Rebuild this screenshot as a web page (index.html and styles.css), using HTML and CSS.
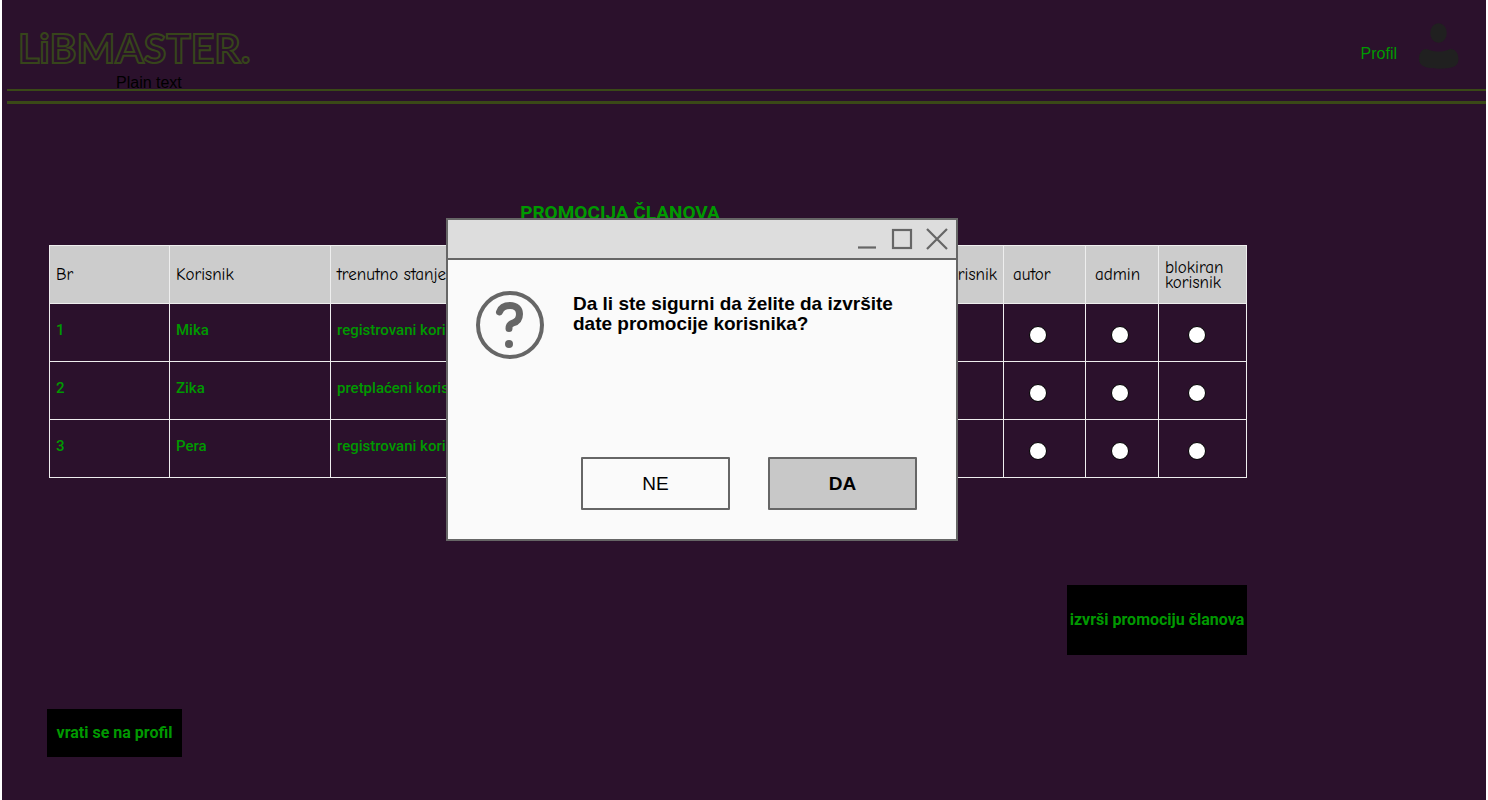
FILE: index.html
```html
<!DOCTYPE html>
<html lang="sr-Latn">
<head>
<meta charset="utf-8">
<title>Libmaster – Promocija članova</title>
<link rel="stylesheet" href="styles.css">
</head>
<body>
<div class="page">
  <header class="header">
    <div class="brand">
      <div class="logo">LiBMASTER.</div>
      <div class="tagline">Plain text</div>
    </div>
    <a class="profile" href="#profil">
      <span>Profil</span>
      <svg class="avatar" viewBox="0 0 40 46" aria-hidden="true"><ellipse cx="19.500" cy="10" rx="8.300" ry="9.800"/><path d="M0 36C0 30 3 25.500 8 26C12 28 16 28.500 20 28.500C24 28.500 27 28 31 26C36 25.500 39.500 30 39.500 36C39.500 42 36 44 30 45C23 46 15 46 8 44.500C3 43 0 41 0 36Z"/></svg>
    </a>
  </header>
  <main class="content">
    <h1 class="title">PROMOCIJA ČLANOVA</h1>
    <table class="members">
      <colgroup>
        <col class="col-no"><col class="col-user"><col class="col-state"><col class="col-sub"><col class="col-author"><col class="col-admin"><col class="col-blocked">
      </colgroup>
      <thead>
        <tr><th>Br</th><th>Korisnik</th><th>trenutno stanje</th><th class="end">pretplaćeni korisnik</th><th class="role">autor</th><th class="role">admin</th><th>blokiran korisnik</th></tr>
      </thead>
      <tbody>
        <tr><td>1</td><td>Mika</td><td>registrovani korisnik</td>
          <td class="pick"><input type="radio" name="r1" aria-label="Mika: pretplaćeni korisnik"></td><td class="pick"><input type="radio" name="r1" aria-label="Mika: autor"></td><td class="pick"><input type="radio" name="r1" aria-label="Mika: admin"></td><td class="pick wide"><input type="radio" name="r1" aria-label="Mika: blokiran korisnik"></td></tr>
        <tr><td>2</td><td>Zika</td><td>pretplaćeni korisnik</td>
          <td class="pick"><input type="radio" name="r2" aria-label="Zika: pretplaćeni korisnik"></td><td class="pick"><input type="radio" name="r2" aria-label="Zika: autor"></td><td class="pick"><input type="radio" name="r2" aria-label="Zika: admin"></td><td class="pick wide"><input type="radio" name="r2" aria-label="Zika: blokiran korisnik"></td></tr>
        <tr><td>3</td><td>Pera</td><td>registrovani korisnik</td>
          <td class="pick"><input type="radio" name="r3" aria-label="Pera: pretplaćeni korisnik"></td><td class="pick"><input type="radio" name="r3" aria-label="Pera: autor"></td><td class="pick"><input type="radio" name="r3" aria-label="Pera: admin"></td><td class="pick wide"><input type="radio" name="r3" aria-label="Pera: blokiran korisnik"></td></tr>
      </tbody>
    </table>
    <div class="submit-row"><button class="action promote" type="button">izvrši promociju članova</button></div>
    <div class="back-row"><button class="action back" type="button">vrati se na profil</button></div>
  </main>
  <div class="overlay">
    <section class="dialog" role="dialog" aria-modal="true" aria-labelledby="question">
      <div class="titlebar">
        <button type="button" aria-label="Umanji"><svg viewBox="0 0 22 22"><path d="M2 19.500H20"/></svg></button>
        <button type="button" aria-label="Uvećaj"><svg viewBox="0 0 22 22"><rect x="2" y="2" width="18" height="18"/></svg></button>
        <button type="button" aria-label="Zatvori"><svg viewBox="0 0 22 22"><path d="M1 1L21 21M21 1L1 21"/></svg></button>
      </div>
      <div class="message">
        <svg class="question" viewBox="0 0 68 68" aria-hidden="true"><circle cx="34" cy="34" r="32" fill="none" stroke="#666" stroke-width="4"/><path d="M23.500 21C25 16.500 29 14.500 34 14.500C40.500 14.500 43.500 18.500 43.500 23C43.500 28 40.500 31 37 32C34 33 33 34 33 37.500" fill="none" stroke="#666" stroke-width="7" stroke-linecap="round"/><circle cx="33" cy="53" r="4" fill="#666"/></svg>
        <p id="question" class="question-text">Da li ste sigurni da želite da izvršite date promocije korisnika?</p>
      </div>
      <div class="choices">
        <button class="choice" type="button">NE</button>
        <button class="choice primary" type="button">DA</button>
      </div>
    </section>
  </div>
</div>
</body>
</html>
```

FILE: styles.css
```css
* { box-sizing: border-box; }
body { margin: 0; background: #fff; font-family: "Liberation Sans", Arial, sans-serif; }
button { font: inherit; cursor: pointer; }
.page { position: relative; min-height: 100vh; margin: 0 2px; background: #2b112c; }

.header { display: flex; justify-content: space-between; align-items: flex-start; height: 104px; margin-left: 5px; padding: 23px 27px 0 11px; background: linear-gradient(#3a4917, #3a4917) 0 89px / 100% 2px no-repeat, linear-gradient(#3a4917, #3a4917) 0 101px / 100% 3px no-repeat; }
.brand { display: flex; flex-direction: column; align-items: flex-start; }
.logo { font: 700 41px/50px Lato, sans-serif; color: #2b112c; -webkit-text-stroke: 2px #37451b; }
.tagline { margin-left: 98px; font-size: 16px; line-height: 20px; color: #000; }
.profile { display: flex; align-items: center; gap: 22px; color: #090; font-size: 16px; text-decoration: none; }
.profile span { padding-top: 16px; }
.avatar { width: 40px; height: 46px; fill: #202020; }

.content { display: flex; flex-direction: column; width: 1245px; max-width: 100%; padding: 98px 0 42px 45px; }
.title { margin: 0 0 21px; padding-right: 54px; font: 700 19px/22px Roboto, sans-serif; text-align: center; color: #090; }
.members { width: auto; margin-left: 2px; border-collapse: collapse; table-layout: fixed; }
.members th, .members td { height: 58px; border: 1px solid #eee; padding: 0 6px; text-align: left; }
.members th { background: #ccc; color: #000; font: 400 17px/15px "Comic Neue", "Comic Sans MS", Lato, sans-serif; }
.members .role { padding-left: 9px; }
.members .end { padding: 0 6px 0 0; text-align: right; white-space: nowrap; }
.members td { padding-bottom: 6px; font: 500 15px/20px Roboto, sans-serif; color: #090; }
.members .pick { padding: 4px 0 0 25px; }
.members .wide { padding-left: 29px; }
.members input { display: block; appearance: none; width: 18px; height: 18px; margin: 0; border: 1px solid #000; border-radius: 50%; background: #fff; }
.members input:checked { border-width: 5px; }
.col-no { width: 120px; }
.col-user { width: 161px; }
.col-state { width: auto; }
.col-sub { width: 153px; }
.col-author { width: 82px; }
.col-admin { width: 73px; }
.col-blocked { width: 88px; }

.action { border: 0; background: #000; color: #090; font: 700 16px/20px Roboto, sans-serif; white-space: nowrap; padding: 0; }
.submit-row { display: flex; justify-content: flex-end; margin-top: 107px; }
.promote { width: 180px; height: 70px; }
.back-row { display: flex; margin-top: 54px; }
.back { width: 135px; height: 48px; }

.overlay { position: absolute; inset: 0; display: flex; justify-content: center; align-items: flex-start; padding: 218px 84px 0 0; }
.dialog { width: 512px; border: 2px solid #666; background: #fafafa; }
.titlebar { display: flex; justify-content: flex-end; align-items: center; gap: 13px; height: 40px; padding-right: 8px; border-bottom: 2px solid #666; background: #ddd; }
.titlebar button { display: flex; padding: 0; border: 0; background: none; }
.titlebar svg { width: 22px; height: 22px; fill: none; stroke: #666; stroke-width: 2.200; }
.message { display: flex; align-items: flex-start; gap: 29px; padding: 31px 28px 0; }
.question { flex: none; width: 68px; height: 68px; }
.question-text { margin: 3px 0 0; font-size: 19px; line-height: 20px; font-weight: 700; }
.choices { display: flex; justify-content: flex-end; gap: 38px; padding: 98px 39px 29px; }
.choice { width: 149px; height: 53px; border: 2px solid #666; border-radius: 1px; background: #fafafa; color: #000; font-size: 19px; }
.choice.primary { background: #c8c8c8; font-weight: 700; }
```
